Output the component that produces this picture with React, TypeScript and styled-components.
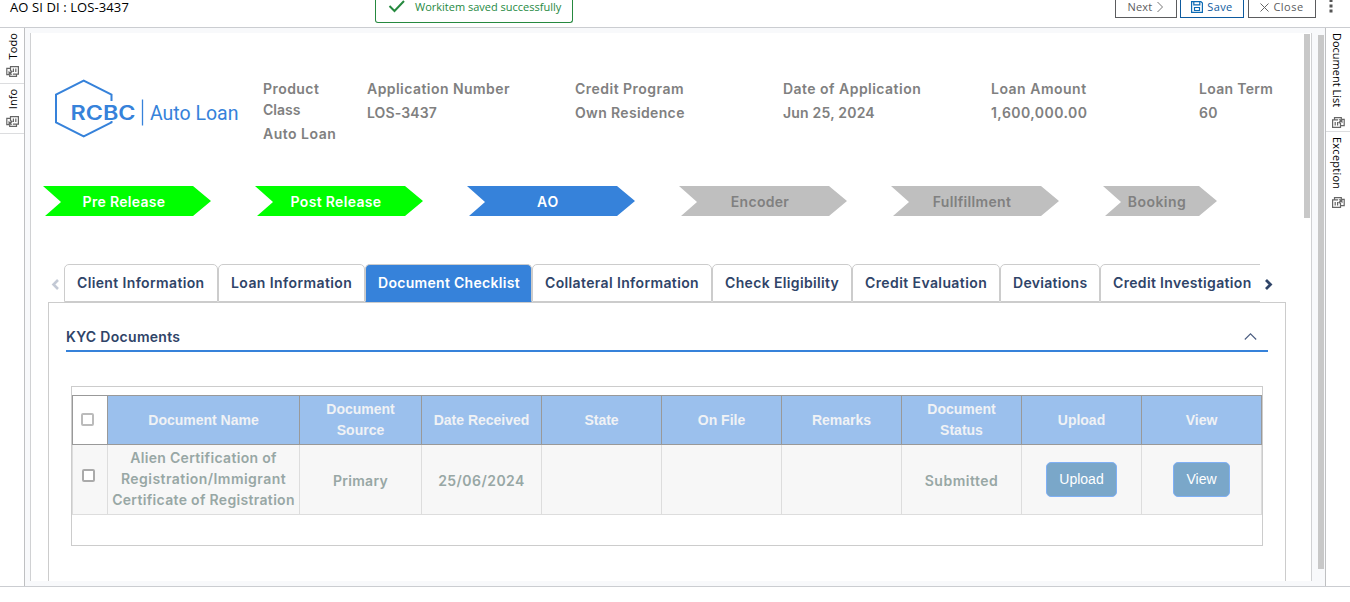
import React from 'react';
import styled, { createGlobalStyle } from 'styled-components';

const GlobalStyle = createGlobalStyle`
  * { box-sizing: border-box; }
  html, body { margin: 0; padding: 0; background: #fff; overflow: hidden; }
  body { font-family: 'Open Sans', 'Noto Sans', sans-serif; color: #000; }
`;

const ui = `'Inter', 'Liberation Sans', sans-serif`;

const Page = styled.div`
  display: flex;
  flex-direction: column;
  width: 1350px;
  height: 602px;
  overflow: hidden;
`;

const TopBar = styled.header`
  display: flex;
  align-items: flex-start;
  height: 28px;
  border-bottom: 1px solid #cbcdd1;
`;

const Title = styled.div`
  width: 375px;
  padding-left: 10px;
  font-size: 13px;
  line-height: 14px;
`;

const Toast = styled.div`
  display: flex;
  align-items: flex-start;
  width: 198px;
  height: 23px;
  padding-left: 12px;
  gap: 9px;
  border: 1px solid #26893f;
  border-top: 0;
  border-radius: 0 0 3px 3px;
  color: #26893f;
  font-size: 11px;
  line-height: 13px;
  white-space: nowrap;
`;

const Actions = styled.div`
  display: flex;
  margin-left: auto;
  padding-right: 16px;
`;

const ActionButton = styled.button<{ $w: number; $primary?: boolean; $mr: number }>`
  display: flex;
  align-items: center;
  justify-content: center;
  gap: 4px;
  width: ${(p) => p.$w}px;
  height: 18px;
  margin-right: ${(p) => p.$mr}px;
  padding: 0 0 3px;
  border: 1px solid ${(p) => (p.$primary ? '#0d5a9e' : '#5b5c5e')};
  border-top: 0;
  background: #fff;
  color: ${(p) => (p.$primary ? '#0d5a9e' : '#5b5c5e')};
  font: 11px/14px 'Open Sans', 'Noto Sans', sans-serif;
`;

const Main = styled.div`
  display: flex;
  height: 559px;
  border-bottom: 1px solid #cbcdd1;
`;

const Rail = styled.aside<{ $side: 'left' | 'right' }>`
  width: 25px;
  flex: none;
  background: #fff;
  ${(p) => (p.$side === 'left' ? 'border-right: 1px solid #bfc0c2;' : 'border-left: 1px solid #bfc0c2;')}
`;

const RailItem = styled.div<{ $h: number; $pb: number; $line?: boolean }>`
  display: flex;
  flex-direction: column;
  align-items: center;
  justify-content: space-between;
  height: ${(p) => p.$h}px;
  padding: 5px 0 ${(p) => p.$pb}px;
  border-bottom: ${(p) => (p.$line ? '1px solid #dcdddf' : '0')};
`;

const RailLabel = styled.span<{ $flip?: boolean; $ls?: number }>`
  writing-mode: vertical-rl;
  font-size: 11px;
  line-height: 16px;
  letter-spacing: ${(p) => p.$ls ?? 0}px;
  white-space: nowrap;
  ${(p) => p.$flip ? 'transform: rotate(180deg); margin-left: 2px;' : 'margin-right: 2px;'}
`;

const Surface = styled.main`
  display: flex;
  flex: 1;
  min-width: 0;
  padding: 5px 0 5px 5px;
  background: #f8f9fb;
`;

const Frame = styled.div`
  display: flex;
  flex: 1;
  min-width: 0;
  height: 548px;
  border-left: 1px solid #d0d1d3;
  border-right: 1px solid #d0d1d3;
  background: #fff;
  overflow: hidden;
`;

const Content = styled.div`
  width: 1273px;
  flex: none;
`;

const Thumb = styled.div<{ $h: number; $ml: number; $mt: number }>`
  width: 6px;
  flex: none;
  height: ${(p) => p.$h}px;
  margin: ${(p) => p.$mt}px 1px 0 ${(p) => p.$ml}px;
  background: #c8c8c8;
`;

const Summary = styled.section`
  display: grid;
  grid-template-columns: 232px 104px 208px 208px 208px 208px 100px;
  height: 153px;
`;

const LogoBox = styled.div`
  padding: 44px 0 0 22px;
`;

const Field = styled.div`
  padding-top: 45px;
  color: #808080;
  font: 600 14px/21px ${ui};
`;

const FieldValue = styled.div`
  margin-top: 3px;
`;

const Spaced = styled.span<{ $ls: number }>`
  letter-spacing: ${(p) => p.$ls}px;
  white-space: nowrap;
`;

const Steps = styled.nav`
  display: flex;
  gap: 44px;
  height: 78px;
  padding-left: 12px;
`;

const tones = {
  done: ['#00ff00', '#ffffff'],
  active: ['#3682da', '#ffffff'],
  idle: ['#bfbfbf', '#808080'],
};

const Step = styled.div<{ $tone: keyof typeof tones; $w: number }>`
  width: ${(p) => p.$w}px;
  height: 30px;
  padding-right: 6px;
  background: ${(p) => tones[p.$tone][0]};
  color: ${(p) => tones[p.$tone][1]};
  clip-path: polygon(0 0, calc(100% - 18px) 0, 100% 50%, calc(100% - 18px) 100%, 2px 100%, 18px 53%);
  font: 600 14px/32px ${ui};
  text-align: center;
`;

const TabStrip = styled.div`
  display: flex;
  height: 38px;
`;

const TabArrow = styled.div<{ $w: number }>`
  display: flex;
  align-items: center;
  width: ${(p) => p.$w}px;
  flex: none;
  padding-top: 1px;
`;

const TabList = styled.div`
  display: flex;
  width: 1196px;
  overflow: hidden;
`;

const Tab = styled.div<{ $w: number; $on?: boolean }>`
  width: ${(p) => p.$w}px;
  flex: none;
  padding-left: 12px;
  border: 1px solid #ccc;
  border-radius: 5px 5px 0 0;
  ${(p) => p.$on && 'border-bottom-color: #3682da;'}
  background: ${(p) => (p.$on ? '#3682da' : '#fff')};
  color: ${(p) => (p.$on ? '#fff' : '#2f4468')};
  font: 600 14px/36px ${ui};
`;

const Panel = styled.section`
  width: 1238px;
  height: 290px;
  margin-left: 17px;
  padding: 24px 17px 0;
  border: 1px solid #ccc;
`;

const SectionHead = styled.div`
  display: flex;
  justify-content: space-between;
  height: 25px;
  padding-right: 11px;
  border-bottom: 2px solid #3682da;
  color: #2f4468;
  font: 600 14px/20px ${ui};
`;

const TableBox = styled.div`
  width: 1192px;
  height: 160px;
  margin: 34px 0 0 5px;
  padding-top: 8px;
  border: 1px solid #ccc;
`;

const Table = styled.table`
  width: 1190px;
  border-collapse: collapse;
  table-layout: fixed;
`;

const HeadCell = styled.th<{ $blank?: boolean }>`
  height: 49px;
  padding: 0;
  border: 1px solid #999;
  background: ${(p) => (p.$blank ? '#fff' : '#9bc0ed')};
  color: #f0f2f5;
  font: 700 14px/21px 'Liberation Sans', Arial, sans-serif;
`;

const Cell = styled.td`
  height: 70px;
  padding: 0;
  border: 1px solid #ddd;
  background: #f7f7f7;
  color: #98a7a5;
  font: 600 14px/21px ${ui};
  text-align: center;
`;

const CellText = styled.div<{ $raised?: boolean }>`
  padding: ${(p) => (p.$raised ? '0 0 2px' : '1px 0 0')};
`;

const Check = styled.span<{ $dark?: boolean }>`
  display: block;
  width: 13px;
  height: 13px;
  margin: ${(p) => (p.$dark ? '-8px 0 0 9px' : '-1px 0 0 8px')};
  border: 2px solid ${(p) => (p.$dark ? '#aaa' : '#bbb')};
  border-radius: 2px;
  background: #fff;
`;

const CellButton = styled.button<{ $w: number }>`
  display: block;
  width: ${(p) => p.$w}px;
  height: 35px;
  margin: 0 auto;
  padding: 0 0 1px;
  border: 1px solid #7fb0f5;
  border-radius: 5px;
  background: #7aa7c9;
  color: #fff;
  font: 14px/20px 'Liberation Sans', Arial, sans-serif;
`;

const ListIcon = ({ flipped }: { flipped?: boolean }) => (
  <svg width="13" height="11" viewBox="0 0 13 11" fill="none" stroke="#666" strokeWidth="1.2">
    <g transform={flipped ? 'rotate(180 6.5 5.5)' : undefined}>
      <path d="M8.5 6v4.4H.6V2.9H6M2.5 2.7V.6h6.8v1.6M3.2 5v3.6M5.6 5v3.6" />
      <path d="M9.3 2.4h2.9v6.2H9" />
      <path d="M6.5 2.2h4v4l-1.4-1.3-1.8 1.8-1.2-1.2 1.8-1.8z" fill="#666" stroke="none" />
    </g>
  </svg>
);

const Logo = () => (
  <svg width="190" height="64" viewBox="0 0 190 64" fill="#3682da">
    <path d="M58.5 24V17.5L30.7 3.5 3 17.5V45.5l27.7 14L58.5 45.5v-1.5" fill="none" stroke="#3682da" strokeWidth="2" />
    <text x="17.5" y="42.5" fontFamily="Inter, sans-serif" fontSize="19.5" fontWeight="600" textLength="65" lengthAdjust="spacingAndGlyphs">RCBC</text>
    <path d="M89.5 22.5v26" stroke="#3682da" strokeWidth="1.3" />
    <text x="97" y="43" fontFamily="Roboto, sans-serif" fontSize="19.5" textLength="88.5" lengthAdjust="spacing">Auto Loan</text>
  </svg>
);

const fields: [string, number, string, number][] = [
  ['Application Number', 0.45, 'LOS-3437', 0.1],
  ['Credit Program', 0.48, 'Own Residence', 0.35],
  ['Date of Application', 0.47, 'Jun 25, 2024', 0.2],
  ['Loan Amount', 0.5, '1,600,000.00', 0.45],
  ['Loan Term', 0.3, '60', 0.3],
];

const steps: [string, keyof typeof tones, number, number][] = [
  ['Pre Release', 'done', 168, 0.32],
  ['Post Release', 'done', 168, 0.32],
  ['AO', 'active', 168, 0.8],
  ['Encoder', 'idle', 168, 0.3],
  ['Fullfillment', 'idle', 168, 0.32],
  ['Booking', 'idle', 114, 0.45],
];

const tabs: [string, number, number][] = [
  ['Client Information', 154, 0.36],
  ['Loan Information', 147, 0.4],
  ['Document Checklist', 167, 0.3],
  ['Collateral Information', 180, 0.36],
  ['Check Eligibility', 140, 0.35],
  ['Credit Evaluation', 148, 0.4],
  ['Deviations', 100, 0.3],
  ['Credit Investigation', 170, 0.33],
];

const columns = [35, 192, 122, 120, 120, 120, 120, 120, 120, 120];
const headings = ['Document Name', 'Document\nSource', 'Date Received', 'State', 'On File', 'Remarks', 'Document\nStatus', 'Upload', 'View'];

export default function App() {
  return (
    <Page>
      <GlobalStyle />
      <TopBar>
        <Title><Spaced $ls={0.1}>AO SI DI : LOS-3437</Spaced></Title>
        <Toast>
          <svg width="18" height="14" viewBox="0 0 18 14" fill="none" stroke="#26893f" strokeWidth="2"><path d="M1.5 6l5 5L16 1" /></svg>
          <Spaced $ls={0}>Workitem saved successfully</Spaced>
        </Toast>
        <Actions>
          <ActionButton $w={62} $mr={3}>
            <Spaced $ls={0.2}>Next</Spaced>
            <svg width="8" height="12" viewBox="0 0 8 12" fill="none" stroke="#777"><path d="M1.5 1l5 5-5 5" /></svg>
          </ActionButton>
          <ActionButton $w={64} $mr={4} $primary>
            <svg width="12" height="12" viewBox="0 0 12 12" fill="none" stroke="#0d6bb5" strokeWidth="1.2"><path d="M.6.6h9.3l1.5 1.5v9.3H.6zM2.8.6v3.2h6V.6M3.5 6.5h5v3h-5z" /></svg>
            <Spaced $ls={0.4}>Save</Spaced>
          </ActionButton>
          <ActionButton $w={68} $mr={10}>
            <svg width="9" height="9" viewBox="0 0 9 9" stroke="#666"><path d="M.5.5l8 8M8.5.5l-8 8" /></svg>
            <Spaced $ls={0.5}>Close</Spaced>
          </ActionButton>
          <svg width="8" height="14" viewBox="0 0 8 14" fill="#555"><path d="M3.5 0h3v2h-3zM3.5 4.5h3v3h-3zM3.5 9.5h3v3h-3z" /></svg>
        </Actions>
      </TopBar>
      <Main>
        <Rail $side="left">
          <RailItem $h={56} $pb={6} $line><RailLabel $flip $ls={0.1}>Todo</RailLabel><ListIcon flipped /></RailItem>
          <RailItem $h={50} $pb={6} $line><RailLabel $flip>Info</RailLabel><ListIcon flipped /></RailItem>
        </Rail>
        <Surface>
          <Frame>
            <Content>
              <Summary>
                <LogoBox><Logo /></LogoBox>
                <Field>
                  <Spaced $ls={0.45}>Product</Spaced><br />
                  <Spaced $ls={0}>Class</Spaced>
                  <FieldValue><Spaced $ls={0.5}>Auto Loan</Spaced></FieldValue>
                </Field>
                {fields.map(([label, ls, value, vs]) => (
                  <Field key={label}>
                    <Spaced $ls={ls}>{label}</Spaced>
                    <FieldValue><Spaced $ls={vs}>{value}</Spaced></FieldValue>
                  </Field>
                ))}
              </Summary>
              <Steps>
                {steps.map(([label, tone, w, ls]) => (
                  <Step key={label} $tone={tone} $w={w}><Spaced $ls={ls}>{label}</Spaced></Step>
                ))}
              </Steps>
              <TabStrip>
                <TabArrow $w={33}>
                  <svg width="33" height="14" viewBox="0 0 33 14" fill="none" stroke="#c3c9d5" strokeWidth="2.6"><path d="M27 3l-4.5 4.5L27 12" /></svg>
                </TabArrow>
                <TabList>
                  {tabs.map(([label, w, ls]) => (
                    <Tab key={label} $w={w} $on={label === 'Document Checklist'}><Spaced $ls={ls}>{label}</Spaced></Tab>
                  ))}
                </TabList>
                <TabArrow $w={20}>
                  <svg width="20" height="14" viewBox="0 0 20 14" fill="none" stroke="#2f4468" strokeWidth="2.8"><path d="M6 3l4.5 4.5L6 12" /></svg>
                </TabArrow>
              </TabStrip>
              <Panel>
                <SectionHead>
                  <Spaced $ls={0.3}>KYC Documents</Spaced>
                  <svg width="13" height="20" viewBox="0 0 13 20" fill="none" stroke="#4a5d80" strokeWidth="1.1"><path d="M.8 12.5l5.7-5.7 5.7 5.7" /></svg>
                </SectionHead>
                <TableBox>
                  <Table>
                    <colgroup>{columns.map((w, i) => <col key={i} width={w} />)}</colgroup>
                    <thead>
                      <tr>
                        <HeadCell $blank><Check /></HeadCell>
                        {headings.map((h) => (
                          <HeadCell key={h}>{h.split('\n').map((line) => <div key={line}><Spaced $ls={0}>{line}</Spaced></div>)}</HeadCell>
                        ))}
                      </tr>
                    </thead>
                    <tbody>
                      <tr>
                        <Cell><Check $dark /></Cell>
                        <Cell>
                          <CellText $raised>
                            <Spaced $ls={0.32}>Alien Certification of</Spaced><br />
                            <Spaced $ls={0.45}>Registration/Immigrant</Spaced><br />
                            <Spaced $ls={0.32}>Certificate of Registration</Spaced>
                          </CellText>
                        </Cell>
                        <Cell><CellText><Spaced $ls={0.3}>Primary</Spaced></CellText></Cell>
                        <Cell><CellText><Spaced $ls={0.45}>25/06/2024</Spaced></CellText></Cell>
                        <Cell /><Cell /><Cell />
                        <Cell><CellText><Spaced $ls={0.5}>Submitted</Spaced></CellText></Cell>
                        <Cell><CellButton $w={71}>Upload</CellButton></Cell>
                        <Cell><CellButton $w={57}>View</CellButton></Cell>
                      </tr>
                    </tbody>
                  </Table>
                </TableBox>
              </Panel>
            </Content>
            <Thumb $h={184} $ml={0} $mt={1} />
          </Frame>
          <Thumb $h={534} $ml={6} $mt={2} />
        </Surface>
        <Rail $side="right">
          <RailItem $h={104} $pb={3} $line><RailLabel>Document List</RailLabel><ListIcon /></RailItem>
          <RailItem $h={80} $pb={4}><RailLabel $ls={0.25}>Exception</RailLabel><ListIcon /></RailItem>
        </Rail>
      </Main>
    </Page>
  );
}
